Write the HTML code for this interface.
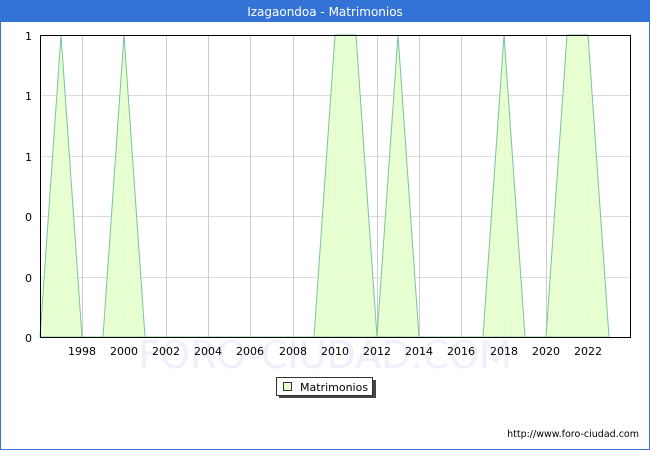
<!DOCTYPE html>
<html><head><style>
body{margin:0;width:650px;height:450px;overflow:hidden;background:#fff;font-family:"DejaVu Sans","Liberation Sans",sans-serif}
</style></head><body>
<svg width="650" height="450" xmlns="http://www.w3.org/2000/svg" style="position:absolute;left:0;top:0">
<rect x="0.5" y="0.5" width="649" height="449" fill="#fff" stroke="#3373d6"/>
<rect x="0" y="0" width="650" height="22" fill="#3373d6"/>
<text x="325" y="16" fill="#fff" font-size="12" text-anchor="middle" font-family="DejaVu Sans,sans-serif">Izagaondoa - Matrimonios</text>
<g stroke="#dcdcdc" stroke-width="1">
<line x1="40" y1="95.5" x2="630" y2="95.5"/><line x1="40" y1="156.5" x2="630" y2="156.5"/><line x1="40" y1="216.5" x2="630" y2="216.5"/><line x1="40" y1="277.5" x2="630" y2="277.5"/>
</g>
<g stroke="#cccccc" stroke-width="1">
<line x1="82.5" y1="35" x2="82.5" y2="337"/><line x1="124.5" y1="35" x2="124.5" y2="337"/><line x1="166.5" y1="35" x2="166.5" y2="337"/><line x1="208.5" y1="35" x2="208.5" y2="337"/><line x1="250.5" y1="35" x2="250.5" y2="337"/><line x1="293.5" y1="35" x2="293.5" y2="337"/><line x1="335.5" y1="35" x2="335.5" y2="337"/><line x1="377.5" y1="35" x2="377.5" y2="337"/><line x1="419.5" y1="35" x2="419.5" y2="337"/><line x1="461.5" y1="35" x2="461.5" y2="337"/><line x1="504.5" y1="35" x2="504.5" y2="337"/><line x1="546.5" y1="35" x2="546.5" y2="337"/><line x1="588.5" y1="35" x2="588.5" y2="337"/>
</g>
<text x="325" y="368" fill="#eef0fb" font-size="38" text-anchor="middle" font-family="DejaVu Sans,sans-serif">FORO-CIUDAD.COM</text>
<polygon points="40,337 61,35 82,337 103,337 124,35 145,337 314,337 335,35 356,35 377,337 398,35 419,337 483,337 504,35 525,337 546,337 567,35 588,35 609,337" fill="#e6ffcc" fill-opacity="0.9" stroke="#7ac49a" stroke-width="1"/>
<rect x="40.5" y="35.5" width="590" height="302" fill="none" stroke="#000" stroke-width="1"/>
<g font-size="11" fill="#000" text-anchor="end" font-family="DejaVu Sans,sans-serif">
<text x="32" y="40">1</text><text x="32" y="100">1</text><text x="32" y="161">1</text><text x="32" y="221">0</text><text x="32" y="282">0</text><text x="32" y="342">0</text>
</g>
<g font-size="11" fill="#000" text-anchor="middle" font-family="DejaVu Sans,sans-serif">
<text x="82" y="355">1998</text><text x="124" y="355">2000</text><text x="166" y="355">2002</text><text x="208" y="355">2004</text><text x="250" y="355">2006</text><text x="293" y="355">2008</text><text x="335" y="355">2010</text><text x="377" y="355">2012</text><text x="419" y="355">2014</text><text x="461" y="355">2016</text><text x="504" y="355">2018</text><text x="546" y="355">2020</text><text x="588" y="355">2022</text>
</g>
<rect x="279" y="380" width="97" height="18" fill="#444"/>
<rect x="276.5" y="377.5" width="96" height="18" fill="#fff" stroke="#333"/>
<rect x="283.5" y="382.5" width="8" height="8" fill="#e6ffcc" stroke="#333"/>
<text x="300" y="391" font-size="11" fill="#000" font-family="DejaVu Sans,sans-serif">Matrimonios</text>
<text x="639" y="437" font-size="9.5" fill="#000" text-anchor="end" font-family="DejaVu Sans,sans-serif">http://www.foro-ciudad.com</text>
</svg>
</body></html>
